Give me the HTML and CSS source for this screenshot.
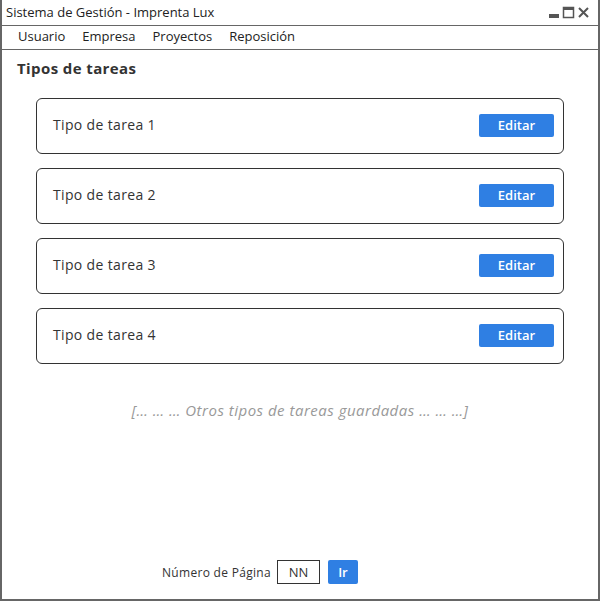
FILE: index.html
```html
<!DOCTYPE html>
<html lang="es">
<head>
<meta charset="utf-8">
<title>Sistema de Gestión - Imprenta Lux</title>
<link rel="stylesheet" href="styles.css">
</head>
<body>
<div class="window">
  <div class="titlebar">
    <span class="title">Sistema de Gestión - Imprenta Lux</span>
    <div class="controls">
      <svg width="44" height="14" viewBox="0 0 44 14">
        <rect x="1" y="8" width="10" height="4" fill="#555"/>
        <rect x="15.5" y="1.5" width="10" height="10" fill="none" stroke="#555" stroke-width="1.5"/>
        <rect x="15" y="1" width="11" height="3" fill="#555"/>
        <path d="M31 2 L40 11 M40 2 L31 11" stroke="#555" stroke-width="2" fill="none"/>
      </svg>
    </div>
  </div>
  <nav class="menu">
    <span>Usuario</span>
    <span>Empresa</span>
    <span>Proyectos</span>
    <span>Reposición</span>
  </nav>
  <main class="content">
    <h1 class="heading">Tipos de tareas</h1>
    <div class="list">
      <div class="card"><span class="label">Tipo de tarea 1</span><button class="btn">Editar</button></div>
      <div class="card"><span class="label">Tipo de tarea 2</span><button class="btn">Editar</button></div>
      <div class="card"><span class="label">Tipo de tarea 3</span><button class="btn">Editar</button></div>
      <div class="card"><span class="label">Tipo de tarea 4</span><button class="btn">Editar</button></div>
    </div>
    <p class="more">[… … … Otros tipos de tareas guardadas … … …]</p>
    <div class="pager">
      <span class="pager-label">Número de Página</span>
      <span class="page-input">NN</span>
      <button class="go">Ir</button>
    </div>
  </main>
</div>
</body>
</html>
```
FILE: styles.css
```css
* { box-sizing: border-box; }
html, body { margin: 0; padding: 0; background: #fff; }
body { font-family: "Open Sans", "Liberation Sans", sans-serif; color: #333; }
.window {
  width: 600px;
  height: 601px;
  border-left: 2px solid #666;
  border-right: 2px solid #666;
  border-bottom: 2px solid #666;
  display: flex;
  flex-direction: column;
  overflow: hidden;
}
.titlebar {
  height: 26px;
  border-bottom: 1px solid #666;
  display: flex;
  align-items: center;
  justify-content: space-between;
  padding: 0 6px 1px 4px;
}
.title { font-size: 13px; color: #222; }
.controls { display: flex; align-items: center; padding-top: 1px; }
.controls svg { display: block; }
.menu {
  height: 24px;
  border-bottom: 1px solid #666;
  display: flex;
  align-items: center;
  padding: 0 0 3px 16px;
  gap: 17px;
  font-size: 13px;
  color: #222;
}
.content {
  flex: 1;
  display: flex;
  flex-direction: column;
  padding: 8px 0 0 15px;
}
.heading {
  margin: 0;
  font-size: 15px;
  font-weight: 700;
  color: #333;
  line-height: 20px;
  letter-spacing: 0.4px;
}
.list {
  display: flex;
  flex-direction: column;
  gap: 14px;
  margin: 20px 0 0 19px;
  width: 528px;
}
.card {
  height: 56px;
  border: 1px solid #333;
  border-radius: 6px;
  display: flex;
  align-items: center;
  justify-content: space-between;
  padding: 0 9px 2px 16px;
  font-size: 14px;
  color: #333;
}
.label { letter-spacing: 0.35px; margin-bottom: 2px; }
.btn {
  width: 75px;
  height: 23px;
  border: none;
  border-radius: 2px;
  background: #2f7fe3;
  color: #fff;
  font-family: inherit;
  font-size: 13px;
  font-weight: 600;
  padding: 0 0 1px;
}
.more {
  margin: 36px 0 0 -15px;
  text-align: center;
  font-size: 15px;
  font-style: italic;
  color: #999;
  letter-spacing: 0.5px;
}
.pager {
  margin-top: auto;
  margin-bottom: 15px;
  display: flex;
  align-items: center;
  padding-left: 145px;
  font-size: 12px;
  color: #333;
}
.pager-label { margin-right: 6px; letter-spacing: 0.3px; }
.page-input {
  width: 43px;
  height: 24px;
  border: 1px solid #333;
  display: flex;
  align-items: center;
  justify-content: center;
  font-size: 13px;
  margin-right: 8px;
}
.go {
  width: 30px;
  height: 24px;
  border: none;
  border-radius: 2px;
  background: #2f7fe3;
  color: #fff;
  font-family: inherit;
  font-size: 13px;
  font-weight: 600;
  padding: 0;
}
```
